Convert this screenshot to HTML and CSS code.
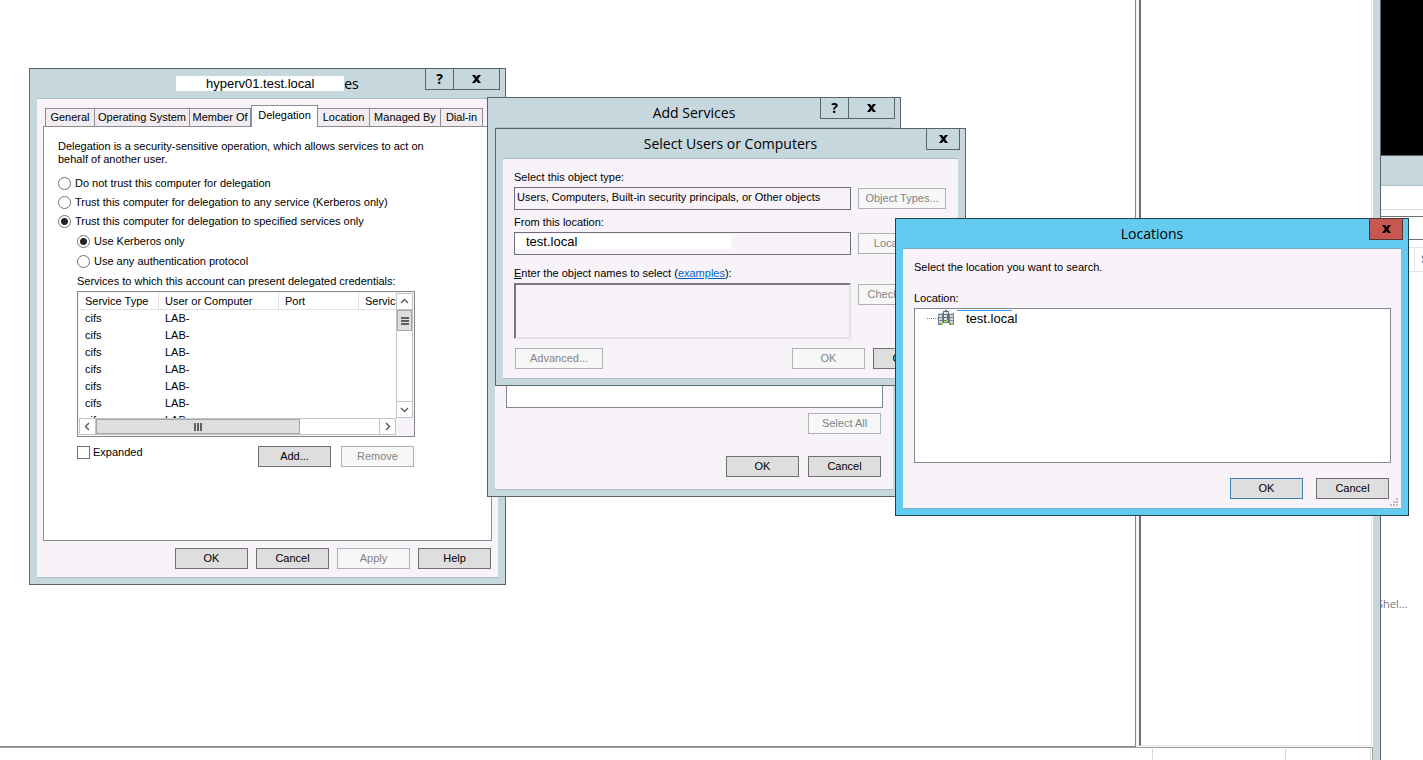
FILE: index.html
```html
<!DOCTYPE html>
<html lang="en">
<head>
<meta charset="utf-8">
<title>Delegation settings</title>
<link rel="stylesheet" href="styles.css">
</head>
<body>
<div class="desktop">
  <main class="console">
    <div class="panes">
      <div class="pane-left"></div>
      <div class="pane-right"></div>
    </div>
    <div class="status"><span class="status-main"></span><span class="status-mid"></span><span class="status-end"></span></div>
  </main>
  <aside class="behind">
    <div class="behind-black"></div>
    <div class="behind-title"></div>
    <div class="behind-menu"></div>
    <div class="behind-field"></div>
    <div class="behind-head"><span>S</span></div>
    <div class="behind-text">Shel...</div>
  </aside>

  <section class="window win-props" aria-label="Properties">
    <header class="titlebar">
      <h1 class="title"><span class="patch">hyperv01.test.local</span>es</h1>
      <div class="controls"><button class="ctl ctl-help">?</button><button class="ctl ctl-close" aria-label="Close"><svg viewBox="0 0 9 8"><path d="M0 0h3l1.500 2L6 0h3L6 4l3 4H6L4.500 6 3 8H0l3-4z"/></svg></button></div>
    </header>
    <div class="client props">
      <div class="tabs" role="tablist">
        <button class="tab t-general" role="tab">General</button><button class="tab t-os" role="tab">Operating System</button><button class="tab t-member" role="tab">Member Of</button><button class="tab t-deleg active" role="tab" aria-selected="true">Delegation</button><button class="tab t-loc" role="tab">Location</button><button class="tab t-managed" role="tab">Managed By</button><button class="tab t-dial" role="tab">Dial-in</button>
      </div>
      <div class="panel" role="tabpanel">
        <p class="intro">Delegation is a security-sensitive operation, which allows services to act on behalf of another user.</p>
        <div class="options">
          <label class="opt"><input type="radio" name="trust">Do not trust this computer for delegation</label>
          <label class="opt"><input type="radio" name="trust">Trust this computer for delegation to any service (Kerberos only)</label>
          <label class="opt"><input type="radio" name="trust" checked>Trust this computer for delegation to specified services only</label>
          <label class="opt sub"><input type="radio" name="proto" checked>Use Kerberos only</label>
          <label class="opt sub"><input type="radio" name="proto">Use any authentication protocol</label>
        </div>
        <div class="services">
          <p class="caption">Services to which this account can present delegated credentials:</p>
          <div class="list">
            <div class="list-view">
              <table class="grid">
                <colgroup><col class="c1"><col class="c2"><col class="c1"><col class="c1"></colgroup>
                <thead><tr><th>Service Type</th><th>User or Computer</th><th>Port</th><th>Servic</th></tr></thead>
                <tbody>
                  <tr><td>cifs</td><td>LAB-</td><td></td><td></td></tr>
                  <tr><td>cifs</td><td>LAB-</td><td></td><td></td></tr>
                  <tr><td>cifs</td><td>LAB-</td><td></td><td></td></tr>
                  <tr><td>cifs</td><td>LAB-</td><td></td><td></td></tr>
                  <tr><td>cifs</td><td>LAB-</td><td></td><td></td></tr>
                  <tr><td>cifs</td><td>LAB-</td><td></td><td></td></tr>
                  <tr><td>cifs</td><td>LAB-</td><td></td><td></td></tr>
                </tbody>
              </table>
            </div>
            <div class="vbar">
              <button class="arrow" aria-label="Up"><svg viewBox="0 0 9 9"><path d="M1 6l3.500-3.500L8 6"/></svg></button>
              <div class="thumb vthumb"><svg viewBox="0 0 8 8"><path d="M0 1h8M0 4h8M0 7h8"/></svg></div>
              <button class="arrow down" aria-label="Down"><svg viewBox="0 0 9 9"><path d="M1 3l3.500 3.500L8 3"/></svg></button>
            </div>
            <div class="hbar">
              <button class="arrow" aria-label="Left"><svg viewBox="0 0 9 9"><path d="M6 1L2.500 4.500 6 8"/></svg></button>
              <div class="thumb hthumb"><svg viewBox="0 0 8 8"><path d="M1 0v8M4 0v8M7 0v8"/></svg></div>
              <button class="arrow right" aria-label="Right"><svg viewBox="0 0 9 9"><path d="M3 1l3.500 3.500L3 8"/></svg></button>
            </div>
          </div>
          <div class="row">
            <label class="check"><input type="checkbox">Expanded</label>
            <button class="btn">Add...</button>
            <button class="btn" disabled>Remove</button>
          </div>
        </div>
      </div>
      <div class="footer"><button class="btn">OK</button><button class="btn">Cancel</button><button class="btn" disabled>Apply</button><button class="btn">Help</button></div>
    </div>
  </section>

  <section class="window win-add" aria-label="Add Services">
    <header class="titlebar">
      <h1 class="title">Add Services</h1>
      <div class="controls"><button class="ctl ctl-help">?</button><button class="ctl ctl-close" aria-label="Close"><svg viewBox="0 0 9 8"><path d="M0 0h3l1.500 2L6 0h3L6 4l3 4H6L4.500 6 3 8H0l3-4z"/></svg></button></div>
    </header>
    <div class="client add">
      <div class="add-list"></div>
      <button class="btn" disabled>Select All</button>
      <div class="add-footer"><button class="btn">OK</button><button class="btn">Cancel</button></div>
    </div>
  </section>

  <section class="window win-select" aria-label="Select Users or Computers">
    <header class="titlebar">
      <h1 class="title">Select Users or Computers</h1>
      <div class="controls"><button class="ctl ctl-small" aria-label="Close"><svg viewBox="0 0 9 8"><path d="M0 0h3l1.500 2L6 0h3L6 4l3 4H6L4.500 6 3 8H0l3-4z"/></svg></button></div>
    </header>
    <div class="client select">
      <label class="field-label" for="otype">Select this object type:</label>
      <div class="pair"><input class="field" id="otype" readonly value="Users, Computers, Built-in security principals, or Other objects"><button class="btn wide" disabled>Object Types...</button></div>
      <label class="field-label" for="loc">From this location:</label>
      <div class="pair spaced"><div class="field masked"><input class="field-text" id="loc" readonly value="test.local"></div><button class="btn wide" disabled>Locations...</button></div>
      <label class="field-label" for="names"><u>E</u>nter the object names to select (<a href="#">examples</a>):</label>
      <div class="pair"><textarea class="names" id="names" readonly></textarea><button class="btn wide" disabled>Check Names</button></div>
      <div class="select-footer"><button class="btn wide" disabled>Advanced...</button><button class="btn push" disabled>OK</button><button class="btn">Cancel</button></div>
    </div>
  </section>

  <section class="window win-loc" aria-label="Locations">
    <header class="titlebar">
      <h1 class="title">Locations</h1>
      <div class="controls"><button class="ctl ctl-small red" aria-label="Close"><svg viewBox="0 0 9 8"><path d="M0 0h3l1.500 2L6 0h3L6 4l3 4H6L4.500 6 3 8H0l3-4z"/></svg></button></div>
    </header>
    <div class="client loc">
      <p class="hint">Select the location you want to search.</p>
      <p class="caption">Location:</p>
      <div class="tree">
        <span class="branch"></span>
        <svg class="node" viewBox="0 0 16 16">
          <path fill="#75848d" d="M0 3h5v12H0zM11 3h5v12h-5z"/>
          <path fill="#d3dde2" d="M0 3h4v1H0zM1 5h3v2H1zM1 8h3v2H1zM1 11h3v2H1zM11 3h4v1h-4zM12 5h3v2h-3zM12 8h3v2h-3zM12 11h3v2h-3z"/>
          <path fill="#5d6c75" d="M5 1h6v12H5zM7 0h2v1H7z"/>
          <path fill="#dfe7ea" d="M6 2h4v2H6zM6 5h3v2H6zM6 8h3v2H6zM6 11h3v1H6z"/>
          <path fill="#8fe01c" d="M3 13h2v2H3zM8 10h2v2H8zM13 13h2v2h-2z"/>
        </svg>
        <span class="node-text">test.local</span>
      </div>
      <div class="loc-footer"><button class="btn default">OK</button><button class="btn">Cancel</button></div>
      <svg class="grip" viewBox="0 0 8 8"><path fill="#bcb8be" d="M6 0h2v2H6zM3 3h2v2H3zM6 3h2v2H6zM0 6h2v2H0zM3 6h2v2H3zM6 6h2v2H6z"/></svg>
    </div>
  </section>
</div>
</body>
</html>
```

FILE: styles.css
```css
* { box-sizing: border-box; }
body { margin: 0; font: 11px/13px "Liberation Sans", Arial, sans-serif; color: #000; background: #fff; }
p, h1 { margin: 0; }
button, input, textarea { font: inherit; color: inherit; margin: 0; padding: 0; border-radius: 0; }

.desktop { position: relative; display: flex; height: 100vh; overflow: hidden; }

/* Console window */
.console { flex: 1; display: flex; flex-direction: column; background: #c6d7de; border-right: 1px solid #5a6466; padding-right: 7px; }
.panes { flex: 1; display: flex; background: #f7f3f8; gap: 3px; border-right: 1px solid #fff; }
.pane-left { flex: 1; background: #fff; border: solid #85858f; border-width: 0 1px 1px 0; }
.pane-right { width: 233px; margin-bottom: 1px; background: #fff; border: 1px solid #e3e3e3; border-left: 2px solid #6e6e72; border-top: 0; }
.status { height: 13px; background: #fff; border: solid #a0a0a0; border-width: 1px 1px 0 0; display: flex; padding: 1px 1px 0 0; }
.status span { border-right: 1px solid #d8d8d8; }
.status-main { flex: 1; }
.status-mid { width: 133px; }
.status-end { width: 85px; }

.behind { width: 42px; display: flex; flex-direction: column; background: #fff; overflow: hidden; }
.behind-black { height: 155px; background: #000; }
.behind-title { height: 31px; background: #c6d7de; border-top: 1px solid #5a6466; border-bottom: 1px solid #b0bcc4; }
.behind-menu { height: 24px; border-bottom: 1px solid #dadada; }
.behind-field { height: 24px; margin-top: 6px; border: solid #707070; border-width: 1px 0; }
.behind-head { height: 25px; margin-top: 7px; border: solid #e3e3e3; border-width: 1px 0; padding-left: 33px; display: flex; }
.behind-head span { border-left: 1px solid #e3e3e3; padding-left: 6px; line-height: 23px; color: #4a60b0; }
.behind-text { margin-top: 324px; margin-left: -4px; font: 11px/16px "Open Sans", sans-serif; color: #777; }

/* Dialog frame */
.window { position: absolute; background: #c6d7de; border: 1px solid #5a6466; padding: 0 7px 7px; }
.win-props { left: 29px; top: 68px; width: 477px; }
.win-add { left: 487px; top: 97px; width: 414px; }
.win-select { left: 495px; top: 128px; width: 471px; }
.win-loc { left: 895px; top: 218px; width: 514px; background: #63caf0; border-color: #25404c; }
.titlebar { height: 29px; display: flex; justify-content: center; }
.title { font: 14px/30px "Open Sans", sans-serif; }
.patch { display: inline-block; width: 168px; height: 15px; margin-bottom: 4px; background: #fff; font: 13px/15px "Liberation Sans", Arial, sans-serif; text-align: center; vertical-align: middle; }
.controls { position: absolute; top: -1px; right: 5px; display: flex; }
.ctl { height: 22px; border: 1px solid #5a6466; background: #c6d7de; font: bold 14px/18px "Open Sans", sans-serif; display: flex; align-items: center; justify-content: center; }
.ctl svg { width: 9px; height: 8px; }
.ctl-help { width: 28px; border-right: 0; }
.ctl-close { width: 47px; }
.ctl-small { width: 34px; }
.red { background: #c75750; border-color: #5c3330; }
.client { position: relative; background: #f7f3f8; border-top: 1px solid #b0bcc4; box-shadow: 0 1px #b0c0c6; }
.win-loc .client { border-top-color: #7fa8c8; box-shadow: 0 1px #7fb0cc; }

.btn { width: 73px; height: 21px; border: 1px solid #707070; background: #dedede; text-align: center; flex: none; }
.btn:disabled { background: #f7f7f7; border-color: #adb2b5; color: #838383; }
.btn.wide { width: 88px; }
.btn.default { border-color: #3c7fb1; }

/* Properties */
.props { padding: 7px 6px 8px; }
.tabs { display: flex; align-items: flex-end; padding: 0 9px 0 2px; height: 20px; }
.tab { height: 18px; flex: none; border: 1px solid #8c8c92; border-bottom: 0; border-left-width: 0; background: #f0ecf0; white-space: nowrap; }
.t-general { width: 50px; border-left-width: 1px; }
.t-os { width: 95px; }
.t-member { width: 61px; }
.t-deleg { width: 67px; }
.t-loc { width: 52px; }
.t-managed { width: 71px; }
.t-dial { width: 42px; }
.tab.active { height: 22px; margin-bottom: -1px; background: #fff; border-left-width: 1px; z-index: 1; padding-bottom: 2px; }
.panel { border: 1px solid #8c8c92; background: #fff; height: 415px; padding: 13px 14px; }
.intro { max-width: 370px; }
.options { display: flex; flex-direction: column; align-items: flex-start; padding-top: 7px; }
.opt { display: flex; align-items: center; gap: 4px; height: 20px; }
.opt + .opt { height: 19px; }
.opt + .opt.sub { margin-left: 19px; height: 20px; }
.opt input { appearance: none; width: 13px; height: 13px; border: 1px solid #707070; border-radius: 50%; background: #fff; }
.opt input:checked { background: radial-gradient(circle, #222 3px, #fff 4px); }
.services { margin: 4px 0 0 19px; width: 338px; }
.services .caption { margin-bottom: 3px; }
.list { display: grid; grid-template-columns: 1fr 17px; grid-template-rows: 125px 17px; border: 1px solid #828790; padding: 1px; background: #f7f3f8; }
.list-view { overflow: hidden; background: #fff; }
.grid { width: 360px; table-layout: fixed; border-collapse: separate; border-spacing: 0; }
.c1 { width: 80px; }
.c2 { width: 120px; }
.grid th { height: 17px; font-weight: normal; text-align: left; padding: 0 6px; border: solid #e3e0e4; border-width: 0 1px 1px 0; white-space: nowrap; }
.grid td { height: 17px; padding: 0 7px; }
.grid td:first-child, .grid td:nth-child(2), .grid th { padding-left: 6px; }
.vbar { display: flex; flex-direction: column; background: #fff; border: solid #c4c4c4; border-width: 0 1px; }
.hbar { display: flex; background: #fff; border: solid #c4c4c4; border-width: 1px 0; }
.arrow { width: 17px; height: 15px; flex: none; border: solid #c4c4c4; border-width: 0 1px; background: #fff; display: flex; align-items: center; justify-content: center; }
.vbar .arrow { width: 15px; height: 17px; border-width: 1px 0; }
.arrow svg { width: 9px; height: 9px; fill: none; stroke: #606060; stroke-width: 1.500; }
.thumb { background: #dedede; border: 1px solid #a6a6a6; display: flex; align-items: center; justify-content: center; }
.thumb svg { width: 8px; height: 8px; stroke: #606060; stroke-width: 2; }
.vthumb { height: 21px; }
.hthumb { width: 204px; }
.down { margin-top: auto; }
.right { margin-left: auto; }
.row { display: flex; gap: 10px; padding: 9px 1px 0 0; }
.check { display: flex; align-items: center; gap: 3px; margin-right: auto; height: 13px; }
.check input { appearance: none; width: 13px; height: 13px; border: 1px solid #707070; background: #fff; }
.footer { display: flex; justify-content: flex-end; gap: 8px; padding: 7px 1px 0 0; }

/* Add Services */
.add { padding: 0 12px 12px 11px; display: flex; flex-direction: column; align-items: flex-end; }
.add-list { align-self: stretch; height: 269px; margin: 11px -2px 5px 0; background: #fff; border: 1px solid #828790; }
.add-footer { display: flex; gap: 9px; margin-top: 22px; }

/* Select Users or Computers */
.select { padding: 12px 12px 9px 11px; }
.field-label { display: block; margin-bottom: 3px; }
.pair { display: flex; align-items: flex-start; gap: 7px; margin-bottom: 6px; }
.pair.spaced { margin-bottom: 12px; }
.pair .btn { margin-top: 1px; }
.field { width: 337px; height: 23px; border: 1px solid #707078; background: #f7f3f8; padding: 0 2px 3px; }
.field.masked { padding: 1px 0; }
.field-text { display: block; width: 216px; height: 15px; border: 0; background: #fff; padding-left: 11px; font: 13px/15px "Liberation Sans", Arial, sans-serif; }
.select a { color: #0066cc; }
.names { width: 337px; height: 56px; resize: none; background: #f7f3f8; border: 2px solid; border-color: #77777b #e3e3e3 #e3e3e3 #77777b; }
.select-footer { display: flex; gap: 8px; padding-left: 1px; margin-top: 9px; }
.push { margin-left: auto; }

/* Locations */
.loc { padding: 12px 10px 9px 11px; }
.hint { margin-bottom: 18px; }
.loc .caption { margin-bottom: 3px; }
.tree { display: flex; align-items: flex-start; height: 155px; border: 1px solid #828790; background: #fff; padding: 1px 0 0 12px; }
.branch { width: 11px; margin-top: 8px; border-top: 1px dotted #808080; }
.node { width: 16px; height: 16px; margin-right: 3px; }
.node-text { width: 55px; border-top: 1px solid #3399ff; padding-left: 9px; font: 13px/15px "Liberation Sans", Arial, sans-serif; white-space: nowrap; }
.loc-footer { display: flex; justify-content: flex-end; gap: 13px; padding: 15px 2px 0 0; }
.grip { position: absolute; right: 3px; bottom: 2px; width: 8px; height: 8px; }
```
